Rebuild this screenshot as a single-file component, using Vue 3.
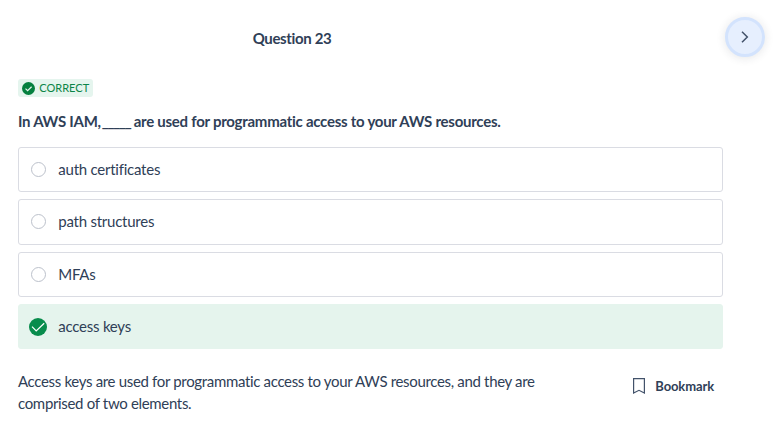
<script setup>
const options = [
  { text: 'auth certificates', correct: false },
  { text: 'path structures', correct: false },
  { text: 'MFAs', correct: false },
  { text: 'access keys', correct: true },
]
</script>

<template>
  <main class="quiz">
    <header class="top">
      <h1 class="title">Question 23</h1>
      <button class="next" type="button" aria-label="Next question">
        <svg width="8" height="12" viewBox="0 0 8 12" fill="none" stroke="#42526a" stroke-width="1.5">
          <path d="M1 0.8 6.3 6 1 11.2" />
        </svg>
      </button>
    </header>

    <div class="badge">
      <svg width="13" height="13" viewBox="0 0 13 13">
        <circle cx="6.5" cy="6.5" r="6.5" fill="#05803f" />
        <path d="M3.5 6.6 5.6 8.6 9.6 4.7" fill="none" stroke="#e6f5ee" stroke-width="1.2" />
      </svg>
      <span>CORRECT</span>
    </div>

    <p class="prompt">In AWS IAM, <span class="blank">_____</span> are used for programmatic access to your AWS resources.</p>

    <ul class="options">
      <li v-for="o in options" :key="o.text" class="option" :class="{ correct: o.correct }">
        <span class="mark">
          <svg v-if="o.correct" width="18" height="18" viewBox="0 0 18 18">
            <circle cx="9" cy="9" r="9" fill="#088c4c" />
            <path d="M3 8.6 7.2 12.9 15.2 5.2" fill="none" stroke="#fff" stroke-width="1.2" />
          </svg>
          <span v-else class="radio"></span>
        </span>
        <span class="label">{{ o.text }}</span>
      </li>
    </ul>

    <footer class="bottom">
      <p class="explain">Access keys are used for programmatic access to your AWS resources, and they are comprised of two elements.</p>
      <button class="bookmark" type="button">
        <svg width="12" height="16" viewBox="0 0 12 16" fill="none" stroke="#42526a" stroke-width="1.2">
          <path d="M0.6 0.6H11.4V15L6 12.3 0.6 15Z" />
        </svg>
        <span>Bookmark</span>
      </button>
    </footer>
  </main>
</template>

<style>
body {
  background: #fff;
}
</style>

<style scoped>
.quiz {
  box-sizing: border-box;
  width: 776px;
  height: 421px;
  padding: 17px 0 0 18px;
  overflow: hidden;
  background: #fff;
  color: #2f4057;
  font-family: Lato, "Liberation Sans", sans-serif;
  font-size: 15px;
  letter-spacing: -0.24px;
}
.top {
  display: flex;
  align-items: center;
  justify-content: space-between;
  height: 40px;
  padding-right: 11px;
}
.title {
  width: 548px;
  margin: 2px 0 0;
  text-align: center;
  font-size: 15px;
  font-weight: 700;
  letter-spacing: -0.35px;
  line-height: 22px;
}
.next {
  box-sizing: border-box;
  display: flex;
  align-items: center;
  justify-content: center;
  width: 40px;
  height: 40px;
  padding: 0;
  border: 3px solid #d3e3fd;
  border-radius: 50%;
  background: #e6effe;
  box-shadow: 0 1px 10px rgba(30, 40, 60, 0.12);
}
.badge {
  box-sizing: border-box;
  display: flex;
  align-items: center;
  gap: 4.2px;
  width: 75px;
  height: 18px;
  margin-top: 22px;
  padding-left: 4px;
  border-radius: 3px;
  background: #e5f5ee;
  color: #0b8547;
  font-size: 11px;
  letter-spacing: 0.03px;
  line-height: 18px;
}
.prompt {
  margin: 14px 0 15.1px;
  font-weight: 700;
  font-size: 15px;
  letter-spacing: -0.26px;
  line-height: 21px;
}
.blank {
  margin-left: -2.4px;
  letter-spacing: -1.3px;
}
.options {
  display: flex;
  flex-direction: column;
  gap: 7.25px;
  width: 705px;
  margin: 0;
  padding: 0;
  list-style: none;
}
.option {
  box-sizing: border-box;
  display: flex;
  align-items: center;
  gap: 10.3px;
  height: 45.1px;
  padding-left: 10px;
  border: 1px solid #dadce3;
  border-radius: 3px;
}
.option.correct {
  border-color: #e5f4ed;
  background: #e5f4ed;
}
.mark {
  display: flex;
  align-items: center;
  justify-content: flex-start;
  width: 19px;
  height: 18px;
}
.radio {
  box-sizing: border-box;
  width: 15px;
  height: 15px;
  margin-left: 2px;
  border: 1px solid #bcc1cb;
  border-radius: 50%;
}
.label {
  padding-bottom: 1.6px;
}
.bottom {
  display: flex;
  align-items: flex-start;
  justify-content: space-between;
  width: 696px;
  margin-top: 21px;
}
.explain {
  width: 530px;
  margin: 0;
  letter-spacing: -0.33px;
  line-height: 22px;
}
.bookmark {
  display: flex;
  align-items: center;
  gap: 10.4px;
  margin-top: 7px;
  padding: 0;
  border: 0;
  background: none;
  color: inherit;
  font: 700 13px/18px Lato, "Liberation Sans", sans-serif;
  letter-spacing: -0.12px;
}
</style>
